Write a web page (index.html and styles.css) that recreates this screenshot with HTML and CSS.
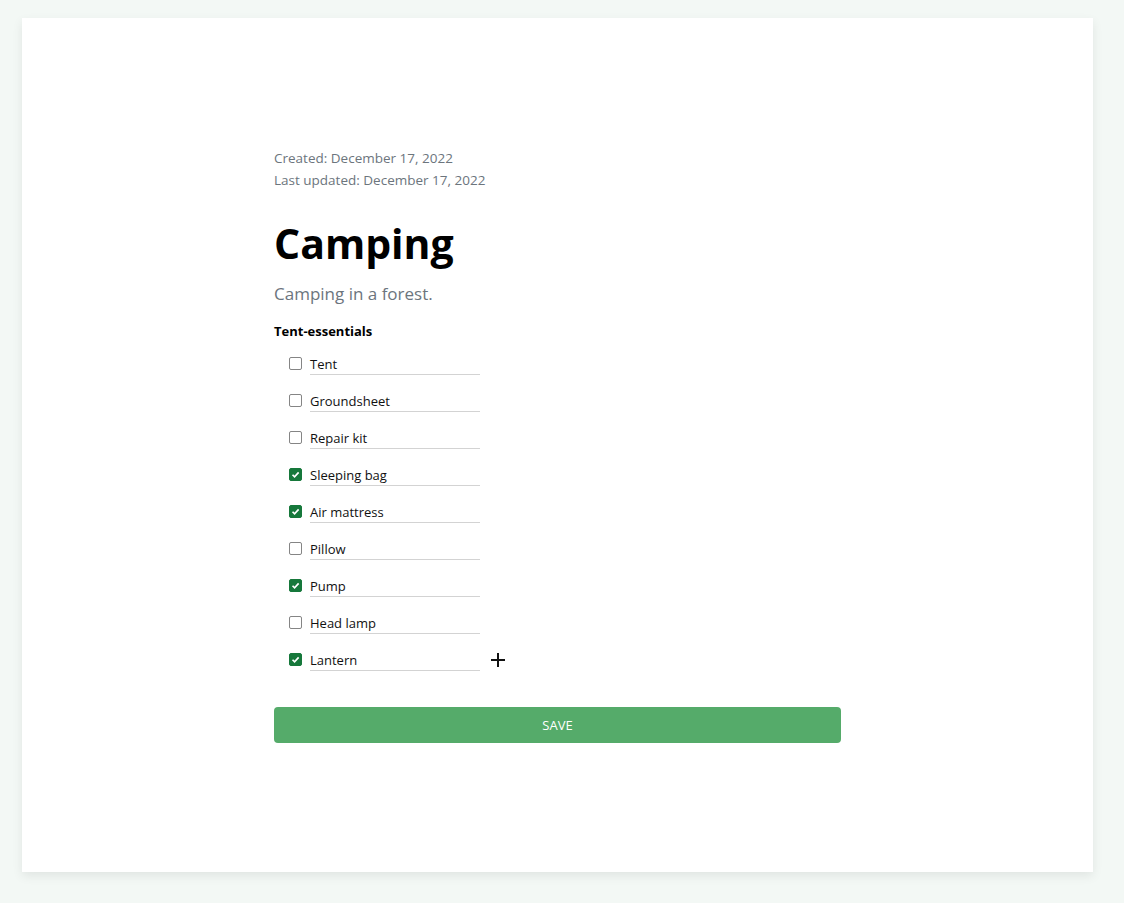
FILE: index.html
```html
<!DOCTYPE html>
<html lang="en">
<head>
<meta charset="utf-8">
<title>Camping</title>
<link rel="stylesheet" href="styles.css">
</head>
<body>
<div class="page">
  <main class="card">
    <div class="content">
      <div class="meta">
        <div>Created: December 17, 2022</div>
        <div>Last updated: December 17, 2022</div>
      </div>
      <h1 class="title">Camping</h1>
      <p class="lead">Camping in a forest.</p>
      <h2 class="section">Tent-essentials</h2>
      <ul class="items">
        <li class="item"><span class="box"></span><span class="field">Tent</span></li>
        <li class="item"><span class="box"></span><span class="field">Groundsheet</span></li>
        <li class="item"><span class="box"></span><span class="field">Repair kit</span></li>
        <li class="item"><span class="box checked"><svg viewBox="0 0 13 13"><path d="M3 6.8l2.4 2.4L10.2 4" fill="none" stroke="#fff" stroke-width="2"/></svg></span><span class="field">Sleeping bag</span></li>
        <li class="item"><span class="box checked"><svg viewBox="0 0 13 13"><path d="M3 6.8l2.4 2.4L10.2 4" fill="none" stroke="#fff" stroke-width="2"/></svg></span><span class="field">Air mattress</span></li>
        <li class="item"><span class="box"></span><span class="field">Pillow</span></li>
        <li class="item"><span class="box checked"><svg viewBox="0 0 13 13"><path d="M3 6.8l2.4 2.4L10.2 4" fill="none" stroke="#fff" stroke-width="2"/></svg></span><span class="field">Pump</span></li>
        <li class="item"><span class="box"></span><span class="field">Head lamp</span></li>
        <li class="item"><span class="box checked"><svg viewBox="0 0 13 13"><path d="M3 6.8l2.4 2.4L10.2 4" fill="none" stroke="#fff" stroke-width="2"/></svg></span><span class="field">Lantern</span><span class="add"><svg viewBox="0 0 16 16"><path d="M8 1v14M1 8h14" stroke="#111" stroke-width="2" fill="none"/></svg></span></li>
      </ul>
      <button class="save">SAVE</button>
    </div>
  </main>
</div>
</body>
</html>
```
FILE: styles.css
```css
html, body {
  margin: 0;
  padding: 0;
}
body {
  background: #f3f8f5;
  font-family: "Open Sans", "Noto Sans", sans-serif;
  color: #111;
}
.page {
  padding: 18px 31px 31px 22px;
}
.card {
  background: #fff;
  height: 854px;
  box-sizing: border-box;
  padding-top: 129px;
  box-shadow: 0 4px 10px rgba(0, 0, 0, 0.08);
}
.content {
  width: 567px;
  margin: 0 auto;
}
.meta {
  font-size: 13.5px;
  line-height: 22px;
  color: #6c757d;
}
.title {
  margin: 24px 0 0;
  font-size: 41px;
  line-height: 56px;
  font-weight: 700;
  color: #000;
}
.lead {
  margin: 10px 0 0;
  font-size: 17px;
  line-height: 26px;
  font-weight: 400;
  color: #6c757d;
}
.section {
  margin: 14px 0 0;
  font-size: 13px;
  line-height: 20px;
  font-weight: 700;
  color: #000;
}
.items {
  list-style: none;
  margin: 3px 0 0;
  padding: 0 0 0 15px;
}
.item {
  display: flex;
  align-items: center;
  height: 37px;
}
.box {
  width: 13px;
  height: 13px;
  box-sizing: border-box;
  border: 1px solid #858585;
  border-radius: 2px;
  margin: 2px 8px 0 0;
  display: flex;
}
.box.checked {
  background: #16783b;
  border-color: #16783b;
}
.box svg {
  width: 11px;
  height: 11px;
}
.field {
  width: 170px;
  font-size: 13px;
  line-height: 19px;
  border-bottom: 1px solid #d3d3d3;
  margin-top: 4px;
}
.add {
  margin: 3px 0 0 10px;
  width: 16px;
  height: 16px;
  display: flex;
}
.add svg {
  width: 16px;
  height: 16px;
}
.save {
  display: block;
  width: 100%;
  height: 36px;
  margin-top: 30px;
  border: none;
  border-radius: 4px;
  background: #55ab6a;
  color: #fff;
  font-family: "Open Sans", "Noto Sans", sans-serif;
  font-size: 13px;
}
```
